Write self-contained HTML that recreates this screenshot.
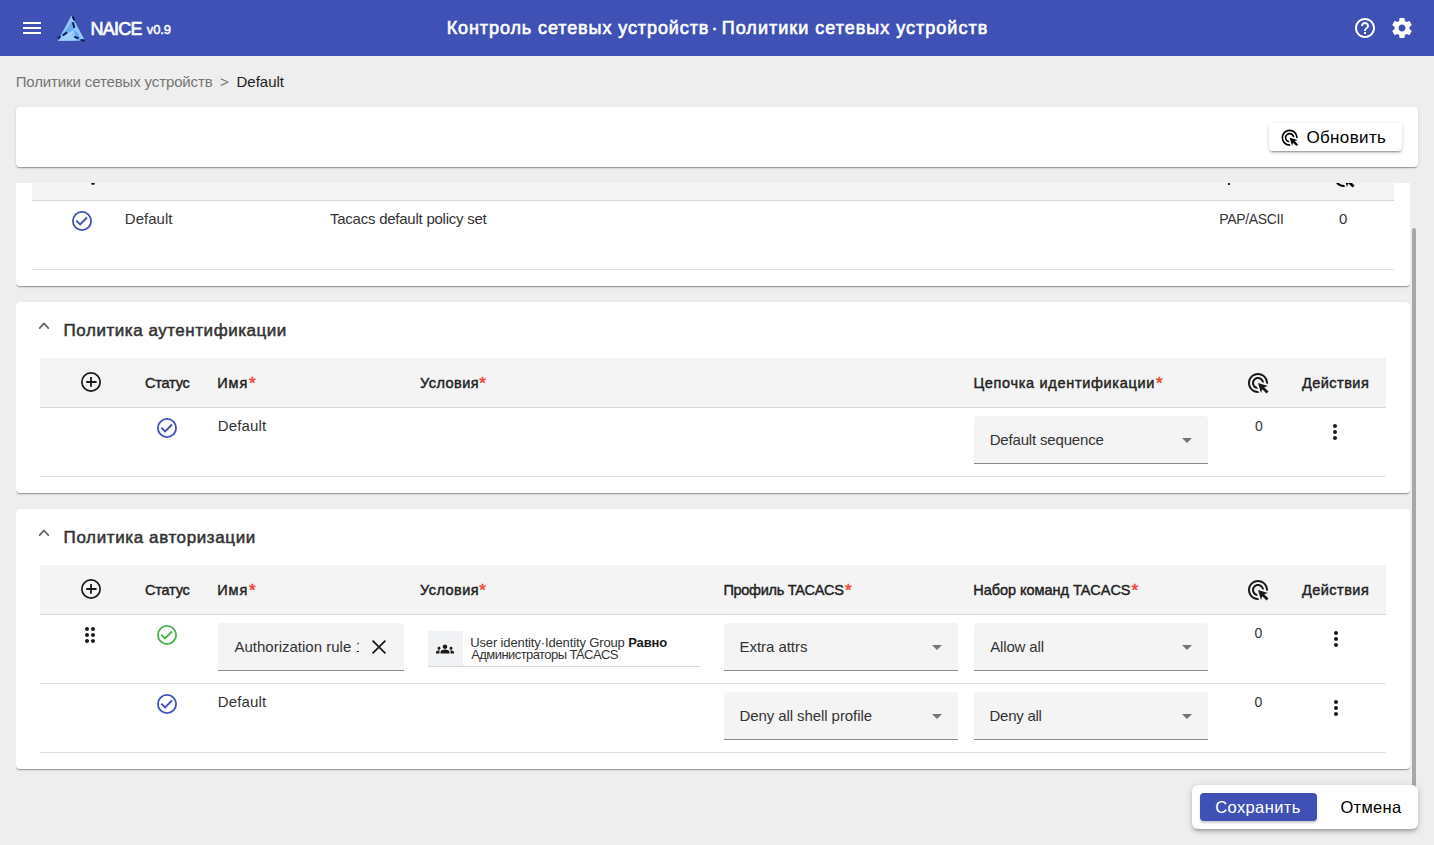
<!DOCTYPE html><html><head><meta charset="utf-8"><style>
*{box-sizing:border-box}
html,body{margin:0;padding:0;width:1434px;height:845px;overflow:hidden;background:#eeeeee;font-family:"Liberation Sans",sans-serif}
.ab{position:absolute}
.tx{position:absolute;white-space:nowrap;line-height:1}
.ic{position:absolute;display:block}
.card{position:absolute;background:#fff;border-radius:4px;box-shadow:0 2px 1px -1px rgba(0,0,0,.2),0 1px 1px 0 rgba(0,0,0,.14),0 1px 3px 0 rgba(0,0,0,.12)}
.thead{position:absolute;background:#f4f4f4;border-bottom:1px solid #d6d6d6}
.hr{position:absolute;height:1px;background:#e0e0e0}
.sel{position:absolute;background:#f4f4f4;border-radius:4px 4px 0 0;border-bottom:1px solid #8a8a8a}
.arrow{position:absolute;width:0;height:0;border-left:5px solid transparent;border-right:5px solid transparent;border-top:5px solid #757575}
</style></head><body>

<div class="ab" style="left:0;top:0;width:1434px;height:56px;background:#3f51b5"></div>
<svg class="ic" style="left:20px;top:16px;width:24px;height:24px;color:#fff;fill:#fff" viewBox="0 0 24 24"><path d="M3 18h18v-2H3v2zm0-5h18v-2H3v2zm0-7v2h18V6H3z"/></svg>
<svg class="ic" style="left:56px;top:14px;width:32px;height:29px" viewBox="56 14 32 29">
<polygon points="71.4,15.4 57.8,40.8 85,40.5" fill="#90c8fb"/>
<polygon points="72,21 73.8,30 66,34.5 62,35.5 68,27" fill="#6fa9f2"/>
<polygon points="73.8,30 75.5,37.2 80,38.8 78,33" fill="#6aa4f0"/>
<polygon points="66,34.5 73.8,30 70.5,36.5 63,37.5" fill="#a6d4fc"/>
<polygon points="57.8,40.8 63,37.5 70.5,36.5 76,37.8 76.5,40.6" fill="#9fd0fc"/>
<polygon points="76.5,40.6 76,37.8 80,38.8 85,40.5" fill="#74adf3"/>
<path d="M72.6,16.5 L74.4,20.3 M72.8,22.3 L74.4,28 M67,32.4 L62.7,35.5 M60.3,36.2 L58.3,38.8 M74.3,36.8 L78.7,38.4 M80.5,40 L85,40.6" stroke="#0b1d55" stroke-width="2" fill="none"/>
</svg>
<svg class="ic" style="left:1352.8px;top:15.9px;width:24px;height:24px;color:#fff;fill:#fff" viewBox="0 0 24 24"><path d="M11 18h2v-2h-2v2zm1-16C6.48 2 2 6.48 2 12s4.48 10 10 10 10-4.48 10-10S17.52 2 12 2zm0 18c-4.41 0-8-3.59-8-8s3.59-8 8-8 8 3.59 8 8-3.59 8-8 8zm0-14c-2.21 0-4 1.79-4 4h2c0-1.1.9-2 2-2s2 .9 2 2c0 2-3 1.750-3 5h2c0-2.25 3-2.5 3-5 0-2.21-1.79-4-4-4z"/></svg>
<svg class="ic" style="left:1389.7px;top:15.9px;width:24px;height:24px;color:#fff;fill:#fff" viewBox="0 0 24 24"><path d="M19.43 12.98c.04-.32.07-.64.07-.98s-.03-.66-.07-.98l2.110-1.65c.19-.15.24-.42.12-.64l-2-3.46c-.12-.22-.39-.3-.61-.22l-2.49 1c-.52-.4-1.08-.73-1.69-.98l-.38-2.65C14.46 2.18 14.25 2 14 2h-4c-.25 0-.46.18-.49.42l-.38 2.65c-.61.25-1.17.59-1.69.98l-2.49-1c-.23-.09-.49 0-.61.22l-2 3.46c-.13.22-.07.49.12.64l2.11 1.65c-.04.32-.07.65-.07.98s.03.66.07.98l-2.11 1.65c-.19.15-.24.42-.12.64l2 3.46c.12.22.39.3.61.22l2.49-1c.52.4 1.08.73 1.69.98l.38 2.65c.03.24.24.42.49.42h4c.25 0 .46-.18.49-.42l.38-2.65c.61-.25 1.17-.59 1.69-.98l2.49 1c.23.09.49 0 .61-.22l2-3.46c.12-.22.07-.49-.12-.64l-2.11-1.65zM12 15.5c-1.93 0-3.5-1.57-3.5-3.5s1.57-3.5 3.5-3.5 3.5 1.57 3.5 3.5-1.57 3.5-3.5 3.5z"/></svg>
<div class="card" style="left:16px;top:107px;width:1402px;height:60px"></div>
<div class="ab" style="left:1269px;top:123px;width:133px;height:28px;background:#fff;border-radius:4px;box-shadow:0 3px 1px -2px rgba(0,0,0,.2),0 2px 2px 0 rgba(0,0,0,.14),0 1px 5px 0 rgba(0,0,0,.12)"></div>
<svg class="ic" style="left:1280.2px;top:127.6px;width:19.3px;height:19.3px;color:#000;fill:#000" viewBox="0 0 24 24"><path d="M11.71,17.99C8.53,17.84,6,15.22,6,12c0-3.31,2.69-6,6-6c3.22,0,5.84,2.53,5.990,5.71l-2.1-0.63C15.48,9.31,13.89,8,12,8c-2.21,0-4,1.79-4,4c0,1.89,1.31,3.48,3.08,3.89L11.71,17.99z M22,12c0,0.3-0.01,0.6-0.04,0.9l-1.97-0.59C20,12.21,20,12.1,20,12c0-4.42-3.58-8-8-8s-8,3.58-8,8s3.58,8,8,8c0.1,0,0.21,0,0.31-0.01l0.59,1.97C12.6,21.99,12.3,22,12,22C6.48,22,2,17.52,2,12C2,6.48,6.48,2,12,2S22,6.48,22,12z M18.23,16.26L22,15l-10-3l3,10l1.26-3.77l4.27,4.27l1.99-1.99L18.23,16.26z"/></svg>
<div class="ab" style="left:16px;top:183px;width:1394px;height:662px;overflow:hidden">
<div class="ab" style="left:-16px;top:-183px;width:1434px;height:845px">
<div class="card" style="left:16px;top:60px;width:1394px;height:226px"></div>
<div class="thead" style="left:32px;top:150px;width:1362px;height:51px"></div>
<div class="hr" style="left:32px;top:269px;width:1362px"></div>
<svg class="ic" style="left:70.4px;top:208.9px;width:24px;height:24px;color:#3f51b5;fill:#3f51b5" viewBox="0 0 24 24"><circle cx="12" cy="12" r="9.1" fill="none" stroke="currentColor" stroke-width="1.8"/><polyline points="6.3,11.6 10.1,15.4 17,8.5" fill="none" stroke="currentColor" stroke-width="1.9"/></svg>
<div class="ab" style="left:91px;top:183px;width:4px;height:2px;background:#222;border-radius:0 0 2px 2px"></div>
<div class="ab" style="left:1228px;top:183px;width:2px;height:2px;background:#222"></div>
<svg class="ic" style="left:1331.7px;top:164.5px;width:24px;height:24px;color:#000;fill:#000" viewBox="0 0 24 24"><path d="M11.71,17.99C8.53,17.84,6,15.22,6,12c0-3.31,2.69-6,6-6c3.22,0,5.84,2.53,5.990,5.71l-2.1-0.63C15.48,9.31,13.89,8,12,8c-2.21,0-4,1.79-4,4c0,1.89,1.31,3.48,3.08,3.89L11.71,17.99z M22,12c0,0.3-0.01,0.6-0.04,0.9l-1.97-0.59C20,12.21,20,12.1,20,12c0-4.42-3.58-8-8-8s-8,3.58-8,8s3.58,8,8,8c0.1,0,0.21,0,0.31-0.01l0.59,1.97C12.6,21.99,12.3,22,12,22C6.48,22,2,17.52,2,12C2,6.48,6.48,2,12,2S22,6.48,22,12z M18.23,16.26L22,15l-10-3l3,10l1.26-3.77l4.27,4.27l1.99-1.99L18.23,16.26z"/></svg>
<div class="card" style="left:16px;top:302px;width:1394px;height:191px"></div>
<svg class="ic" style="left:32px;top:316px;width:24px;height:24px" viewBox="0 0 24 24"><polyline points="7.7,12.1 11.9,7.4 16.3,12.1" fill="none" stroke="#666" stroke-width="1.7" stroke-linecap="round" stroke-linejoin="round"/></svg>
<div class="thead" style="left:40px;top:358px;width:1346px;height:50px"></div>
<svg class="ic" style="left:78.5px;top:369.8px;width:24px;height:24px;color:#1a1a1a;fill:#1a1a1a" viewBox="0 0 24 24"><circle cx="12" cy="12" r="9.15" fill="none" stroke="currentColor" stroke-width="1.7"/><path d="M7.2 12h10.4M12 7.1v9.7" stroke="currentColor" stroke-width="1.8" fill="none"/></svg>
<svg class="ic" style="left:1246.1px;top:371px;width:24px;height:24px;color:#1a1a1a;fill:#1a1a1a" viewBox="0 0 24 24"><path d="M11.71,17.99C8.53,17.84,6,15.22,6,12c0-3.31,2.69-6,6-6c3.22,0,5.84,2.53,5.990,5.71l-2.1-0.63C15.48,9.31,13.89,8,12,8c-2.21,0-4,1.79-4,4c0,1.89,1.31,3.48,3.08,3.89L11.71,17.99z M22,12c0,0.3-0.01,0.6-0.04,0.9l-1.97-0.59C20,12.21,20,12.1,20,12c0-4.42-3.58-8-8-8s-8,3.58-8,8s3.58,8,8,8c0.1,0,0.21,0,0.31-0.01l0.59,1.97C12.6,21.99,12.3,22,12,22C6.48,22,2,17.52,2,12C2,6.48,6.48,2,12,2S22,6.48,22,12z M18.23,16.26L22,15l-10-3l3,10l1.26-3.77l4.27,4.27l1.99-1.99L18.23,16.26z"/></svg>
<div class="hr" style="left:40px;top:476px;width:1346px"></div>
<svg class="ic" style="left:155.3px;top:415.9px;width:24px;height:24px;color:#3f51b5;fill:#3f51b5" viewBox="0 0 24 24"><circle cx="12" cy="12" r="9.1" fill="none" stroke="currentColor" stroke-width="1.8"/><polyline points="6.3,11.6 10.1,15.4 17,8.5" fill="none" stroke="currentColor" stroke-width="1.9"/></svg>
<div class="sel" style="left:974px;top:416px;width:234px;height:48px"></div><div class="arrow" style="left:1182px;top:438px"></div>
<svg class="ic" style="left:1323.3px;top:420.2px;width:24px;height:24px;color:#1a1a1a;fill:#1a1a1a" viewBox="0 0 24 24"><path d="M12 8c1.1 0 2-.9 2-2s-.9-2-2-2-2 .9-2 2 .9 2 2 2zm0 2c-1.1 0-2 .9-2 2s.9 2 2 2 2-.9 2-2-.9-2-2-2zm0 6c-1.1 0-2 .9-2 2s.9 2 2 2 2-.9 2-2-.9-2-2-2z"/></svg>
<div class="card" style="left:16px;top:509px;width:1394px;height:260px"></div>
<svg class="ic" style="left:32px;top:523px;width:24px;height:24px" viewBox="0 0 24 24"><polyline points="7.7,12.1 11.9,7.4 16.3,12.1" fill="none" stroke="#666" stroke-width="1.7" stroke-linecap="round" stroke-linejoin="round"/></svg>
<div class="thead" style="left:40px;top:565px;width:1346px;height:50px"></div>
<svg class="ic" style="left:78.5px;top:576.8px;width:24px;height:24px;color:#1a1a1a;fill:#1a1a1a" viewBox="0 0 24 24"><circle cx="12" cy="12" r="9.15" fill="none" stroke="currentColor" stroke-width="1.7"/><path d="M7.2 12h10.4M12 7.1v9.7" stroke="currentColor" stroke-width="1.8" fill="none"/></svg>
<svg class="ic" style="left:1246.1px;top:578px;width:24px;height:24px;color:#1a1a1a;fill:#1a1a1a" viewBox="0 0 24 24"><path d="M11.71,17.99C8.53,17.84,6,15.22,6,12c0-3.31,2.69-6,6-6c3.22,0,5.84,2.53,5.990,5.71l-2.1-0.63C15.48,9.31,13.89,8,12,8c-2.21,0-4,1.79-4,4c0,1.89,1.31,3.48,3.08,3.89L11.71,17.99z M22,12c0,0.3-0.01,0.6-0.04,0.9l-1.97-0.59C20,12.21,20,12.1,20,12c0-4.42-3.58-8-8-8s-8,3.58-8,8s3.58,8,8,8c0.1,0,0.21,0,0.31-0.01l0.59,1.97C12.6,21.99,12.3,22,12,22C6.48,22,2,17.52,2,12C2,6.48,6.48,2,12,2S22,6.48,22,12z M18.23,16.26L22,15l-10-3l3,10l1.26-3.77l4.27,4.27l1.99-1.99L18.23,16.26z"/></svg>
<div class="hr" style="left:40px;top:683px;width:1346px"></div>
<div class="hr" style="left:40px;top:752px;width:1346px"></div>
<svg class="ic" style="left:78px;top:623px;width:24px;height:24px;color:#1a1a1a;fill:#1a1a1a" viewBox="0 0 24 24"><path d="M11 18c0 1.1-.9 2-2 2s-2-.9-2-2 .9-2 2-2 2 .9 2 2zm-2-8c-1.1 0-2 .9-2 2s.9 2 2 2 2-.9 2-2-.9-2-2-2zm0-6c-1.1 0-2 .9-2 2s.9 2 2 2 2-.9 2-2-.9-2-2-2zm6 4c1.1 0 2-.9 2-2s-.9-2-2-2-2 .9-2 2 .9 2 2 2zm0 2c-1.1 0-2 .9-2 2s.9 2 2 2 2-.9 2-2-.9-2-2-2zm0 6c-1.1 0-2 .9-2 2s.9 2 2 2 2-.9 2-2-.9-2-2-2z"/></svg>
<svg class="ic" style="left:155.1px;top:622.8px;width:24px;height:24px;color:#4caf50;fill:#4caf50" viewBox="0 0 24 24"><circle cx="12" cy="12" r="9.1" fill="none" stroke="currentColor" stroke-width="1.8"/><polyline points="6.3,11.6 10.1,15.4 17,8.5" fill="none" stroke="currentColor" stroke-width="1.9"/></svg>
<div class="sel" style="left:218px;top:623px;width:186px;height:48px"></div>
<svg class="ic" style="left:367.3px;top:635.3px;width:24px;height:24px;color:#1a1a1a;fill:#1a1a1a" viewBox="0 0 24 24"><path d="M5.6 5.6L18.4 18.4M18.4 5.6L5.6 18.4" stroke="currentColor" stroke-width="1.75" fill="none"/></svg>
<div class="ab" style="left:428px;top:631px;width:272px;height:36px;border-bottom:1px solid #d6d6d6"></div>
<div class="ab" style="left:428px;top:631px;width:35px;height:35px;background:#f1f2f4"></div>
<svg class="ic" style="left:436.3px;top:639.8px;width:18px;height:18px;color:#1a1a1a;fill:#1a1a1a" viewBox="0 0 24 24"><path d="M12 12.75c1.63 0 3.07.39 4.24.9 1.08.48 1.76 1.56 1.76 2.73V18H6v-1.61c0-1.18.68-2.26 1.760-2.73 1.17-.52 2.61-.91 4.24-.91zM4 13c1.1 0 2-.9 2-2s-.9-2-2-2-2 .9-2 2 .9 2 2 2zm1.13 1.1c-.37-.06-.74-.1-1.13-.1-.99 0-1.93.21-2.78.58C.48 14.9 0 15.620 0 16.43V18h4.5v-1.61c0-.83.23-1.61.63-2.29zM20 13c1.1 0 2-.9 2-2s-.9-2-2-2-2 .9-2 2 .9 2 2 2zm4 3.43c0-.81-.48-1.53-1.22-1.85-.85-.37-1.79-.58-2.78-.58-.39 0-.76.04-1.13.1.4.68.63 1.46.63 2.29V18H24v-1.57zM12 6c1.66 0 3 1.34 3 3s-1.34 3-3 3-3-1.34-3-3 1.34-3 3-3z"/></svg>
<div class="sel" style="left:724px;top:623px;width:234px;height:48px"></div><div class="arrow" style="left:932px;top:645px"></div>
<div class="sel" style="left:974px;top:623px;width:234px;height:48px"></div><div class="arrow" style="left:1182px;top:645px"></div>
<svg class="ic" style="left:1323.5px;top:627px;width:24px;height:24px;color:#1a1a1a;fill:#1a1a1a" viewBox="0 0 24 24"><path d="M12 8c1.1 0 2-.9 2-2s-.9-2-2-2-2 .9-2 2 .9 2 2 2zm0 2c-1.1 0-2 .9-2 2s.9 2 2 2 2-.9 2-2-.9-2-2-2zm0 6c-1.1 0-2 .9-2 2s.9 2 2 2 2-.9 2-2-.9-2-2-2z"/></svg>
<svg class="ic" style="left:155.3px;top:691.9px;width:24px;height:24px;color:#3f51b5;fill:#3f51b5" viewBox="0 0 24 24"><circle cx="12" cy="12" r="9.1" fill="none" stroke="currentColor" stroke-width="1.8"/><polyline points="6.3,11.6 10.1,15.4 17,8.5" fill="none" stroke="currentColor" stroke-width="1.9"/></svg>
<div class="sel" style="left:724px;top:692px;width:234px;height:48px"></div><div class="arrow" style="left:932px;top:714px"></div>
<div class="sel" style="left:974px;top:692px;width:234px;height:48px"></div><div class="arrow" style="left:1182px;top:714px"></div>
<svg class="ic" style="left:1323.5px;top:696px;width:24px;height:24px;color:#1a1a1a;fill:#1a1a1a" viewBox="0 0 24 24"><path d="M12 8c1.1 0 2-.9 2-2s-.9-2-2-2-2 .9-2 2 .9 2 2 2zm0 2c-1.1 0-2 .9-2 2s.9 2 2 2 2-.9 2-2-.9-2-2-2zm0 6c-1.1 0-2 .9-2 2s.9 2 2 2 2-.9 2-2-.9-2-2-2z"/></svg>
<div class="tx" id="t9" style="left:124.80px;top:211.00px;font-size:15px;font-weight:400;color:#333;letter-spacing:0.034px;">Default</div>
<div class="tx" id="t10" style="left:330.00px;top:211.00px;font-size:15px;font-weight:400;color:#333;letter-spacing:-0.244px;">Tacacs default policy set</div>
<div class="tx" id="t11" style="left:1219.30px;top:212.00px;font-size:14px;font-weight:400;color:#333;letter-spacing:-0.350px;">PAP/ASCII</div>
<div class="tx" id="t12" style="left:1338.90px;top:211.00px;font-size:15px;font-weight:400;color:#333;letter-spacing:0.000px;">0</div>
<div class="tx" id="t13" style="left:63.60px;top:322.00px;font-size:17px;font-weight:400;-webkit-text-stroke:0.51px currentColor;color:#333;letter-spacing:0.536px;">Политика аутентификации</div>
<div class="tx" id="t14" style="left:145.00px;top:376.00px;font-size:14.5px;font-weight:400;-webkit-text-stroke:0.43px currentColor;color:#222;letter-spacing:-0.200px;">Статус</div>
<div class="tx" id="t15" style="left:217.30px;top:376.00px;font-size:14.5px;font-weight:400;-webkit-text-stroke:0.43px currentColor;color:#222;letter-spacing:0.900px;">Имя</div>
<div class="tx" id="t16" style="left:248.90px;top:375.00px;font-size:17px;font-weight:400;-webkit-text-stroke:0.51px currentColor;color:#f44336;letter-spacing:0.000px;">*</div>
<div class="tx" id="t17" style="left:420.10px;top:376.00px;font-size:14.5px;font-weight:400;-webkit-text-stroke:0.43px currentColor;color:#222;letter-spacing:0.435px;">Условия</div>
<div class="tx" id="t18" style="left:479.20px;top:375.00px;font-size:17px;font-weight:400;-webkit-text-stroke:0.51px currentColor;color:#f44336;letter-spacing:0.000px;">*</div>
<div class="tx" id="t19" style="left:1302.00px;top:376.00px;font-size:14.5px;font-weight:400;-webkit-text-stroke:0.43px currentColor;color:#222;letter-spacing:0.457px;">Действия</div>
<div class="tx" id="t20" style="left:973.40px;top:376.00px;font-size:14.5px;font-weight:400;-webkit-text-stroke:0.43px currentColor;color:#222;letter-spacing:0.680px;">Цепочка идентификации</div>
<div class="tx" id="t21" style="left:1155.90px;top:375.00px;font-size:17px;font-weight:400;-webkit-text-stroke:0.51px currentColor;color:#f44336;letter-spacing:0.000px;">*</div>
<div class="tx" id="t22" style="left:217.70px;top:418.00px;font-size:15px;font-weight:400;color:#333;letter-spacing:0.167px;">Default</div>
<div class="tx" id="t23" style="left:989.70px;top:432.00px;font-size:15px;font-weight:400;color:#333;letter-spacing:-0.172px;">Default sequence</div>
<div class="tx" id="t24" style="left:1255.00px;top:419.00px;font-size:14px;font-weight:400;color:#333;letter-spacing:0.000px;">0</div>
<div class="tx" id="t25" style="left:63.60px;top:529.00px;font-size:17px;font-weight:400;-webkit-text-stroke:0.51px currentColor;color:#333;letter-spacing:0.610px;">Политика авторизации</div>
<div class="tx" id="t26" style="left:145.00px;top:583.00px;font-size:14.5px;font-weight:400;-webkit-text-stroke:0.43px currentColor;color:#222;letter-spacing:-0.200px;">Статус</div>
<div class="tx" id="t27" style="left:217.30px;top:583.00px;font-size:14.5px;font-weight:400;-webkit-text-stroke:0.43px currentColor;color:#222;letter-spacing:0.900px;">Имя</div>
<div class="tx" id="t28" style="left:248.90px;top:582.00px;font-size:17px;font-weight:400;-webkit-text-stroke:0.51px currentColor;color:#f44336;letter-spacing:0.000px;">*</div>
<div class="tx" id="t29" style="left:420.10px;top:583.00px;font-size:14.5px;font-weight:400;-webkit-text-stroke:0.43px currentColor;color:#222;letter-spacing:0.435px;">Условия</div>
<div class="tx" id="t30" style="left:479.20px;top:582.00px;font-size:17px;font-weight:400;-webkit-text-stroke:0.51px currentColor;color:#f44336;letter-spacing:0.000px;">*</div>
<div class="tx" id="t31" style="left:1302.00px;top:583.00px;font-size:14.5px;font-weight:400;-webkit-text-stroke:0.43px currentColor;color:#222;letter-spacing:0.457px;">Действия</div>
<div class="tx" id="t32" style="left:723.40px;top:583.00px;font-size:14.5px;font-weight:400;-webkit-text-stroke:0.43px currentColor;color:#222;letter-spacing:-0.294px;">Профиль TACACS</div>
<div class="tx" id="t33" style="left:844.90px;top:582.00px;font-size:17px;font-weight:400;-webkit-text-stroke:0.51px currentColor;color:#f44336;letter-spacing:0.000px;">*</div>
<div class="tx" id="t34" style="left:973.30px;top:583.00px;font-size:14.5px;font-weight:400;-webkit-text-stroke:0.43px currentColor;color:#222;letter-spacing:-0.034px;">Набор команд TACACS</div>
<div class="tx" id="t35" style="left:1131.40px;top:582.00px;font-size:17px;font-weight:400;-webkit-text-stroke:0.51px currentColor;color:#f44336;letter-spacing:0.000px;">*</div>
<div class="tx" id="t36" style="left:739.50px;top:639.00px;font-size:15px;font-weight:400;color:#333;letter-spacing:-0.040px;">Extra attrs</div>
<div class="tx" id="t37" style="left:990.20px;top:639.00px;font-size:15px;font-weight:400;color:#333;letter-spacing:-0.153px;">Allow all</div>
<div class="tx" id="t38" style="left:1254.60px;top:626.00px;font-size:14px;font-weight:400;color:#333;letter-spacing:0.000px;">0</div>
<div class="tx" id="t39" style="left:217.70px;top:694.00px;font-size:15px;font-weight:400;color:#333;letter-spacing:0.167px;">Default</div>
<div class="tx" id="t40" style="left:739.40px;top:708.00px;font-size:15px;font-weight:400;color:#333;letter-spacing:-0.077px;">Deny all shell profile</div>
<div class="tx" id="t41" style="left:989.50px;top:708.00px;font-size:15px;font-weight:400;color:#333;letter-spacing:-0.258px;">Deny all</div>
<div class="tx" id="t42" style="left:1254.60px;top:695.00px;font-size:14px;font-weight:400;color:#333;letter-spacing:0.000px;">0</div>
<div class="tx" id="t43" style="left:470.20px;top:636.00px;font-size:13px;font-weight:400;color:#333;letter-spacing:-0.133px;">User identity·Identity Group <b style="color:#1a1a1a">Равно</b></div>
<div class="tx" id="t44" style="left:471.20px;top:648.00px;font-size:13px;font-weight:400;color:#333;letter-spacing:-0.560px;">Администраторы TACACS</div>
</div></div>
<div class="ab" style="left:1412px;top:228px;width:4px;height:580px;background:#a8a8a8;border-radius:2px"></div>
<div class="ab" style="left:1192px;top:785px;width:226px;height:44px;background:#fff;border-radius:6px;box-shadow:0 3px 3px -2px rgba(0,0,0,.2),0 3px 4px 0 rgba(0,0,0,.14),0 1px 8px 0 rgba(0,0,0,.12)"></div>
<div class="ab" style="left:1200px;top:793px;width:117px;height:28px;background:#3f51b5;border-radius:4px;box-shadow:0 2px 2px rgba(0,0,0,.2)"></div>
<div class="tx" id="t0" style="left:90.50px;top:20.00px;font-size:18px;font-weight:400;-webkit-text-stroke:0.65px currentColor;color:#fff;letter-spacing:-0.750px;">NAICE</div>
<div class="tx" id="t1" style="left:146.80px;top:23.00px;font-size:13px;font-weight:400;-webkit-text-stroke:0.47px currentColor;color:#fff;letter-spacing:-0.132px;">v0.9</div>
<div class="tx" id="t2" style="left:446.70px;top:19.00px;font-size:18px;font-weight:400;-webkit-text-stroke:0.65px currentColor;color:#fff;letter-spacing:0.904px;">Контроль сетевых устройств</div>
<div class="tx" id="t3" style="left:711.60px;top:19.00px;font-size:18px;font-weight:400;-webkit-text-stroke:0.65px currentColor;color:#fff;letter-spacing:0.000px;">·</div>
<div class="tx" id="t4" style="left:721.80px;top:19.00px;font-size:18px;font-weight:400;-webkit-text-stroke:0.65px currentColor;color:#fff;letter-spacing:1.008px;">Политики сетевых устройств</div>
<div class="tx" id="t5" style="left:15.70px;top:74.00px;font-size:15px;font-weight:400;color:#757575;letter-spacing:-0.128px;">Политики сетевых устройств</div>
<div class="tx" id="t6" style="left:220.00px;top:74.00px;font-size:15px;font-weight:400;color:#757575;letter-spacing:0.000px;">&gt;</div>
<div class="tx" id="t7" style="left:236.50px;top:74.00px;font-size:15px;font-weight:400;color:#212121;letter-spacing:-0.000px;">Default</div>
<div class="tx" id="t8" style="left:1306.40px;top:129.00px;font-size:17px;font-weight:400;color:#000;letter-spacing:0.370px;">Обновить</div>
<div class="tx" id="t45" style="left:1215.20px;top:799.00px;font-size:16.5px;font-weight:400;color:#fff;letter-spacing:0.400px;">Сохранить</div>
<div class="tx" id="t46" style="left:1340.50px;top:799.00px;font-size:16.5px;font-weight:400;color:#000;letter-spacing:0.280px;">Отмена</div>
<div class="ab" style="left:233px;top:636px;width:125.5px;height:22px;overflow:hidden"><div class="tx" style="left:1.5px;top:3.25px;font-size:15px;color:#333">Authorization rule 1</div></div>
</body></html>
